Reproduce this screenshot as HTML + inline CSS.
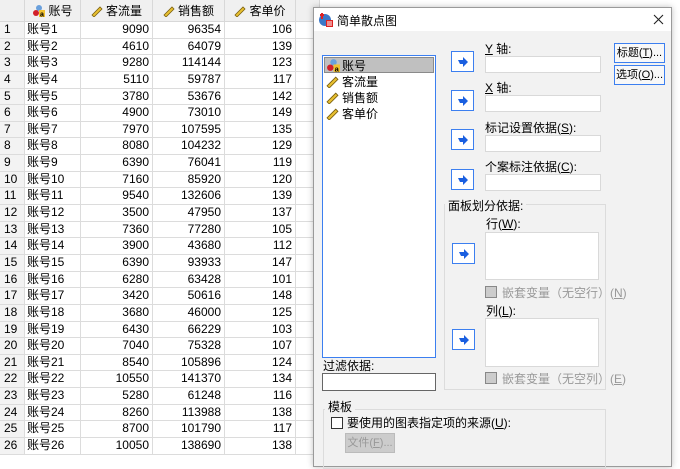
<!DOCTYPE html>
<html><head><meta charset="utf-8"><style>
*{margin:0;padding:0;box-sizing:border-box}
body{width:680px;height:455px;overflow:hidden;background:#fff;font-family:"Liberation Sans","Noto Sans CJK SC",sans-serif;font-size:12px;color:#000;position:relative}
.grid{position:absolute;left:0;top:0;width:320px}
.hdr{height:22px;background:#f0f0f0;border-bottom:1px solid #d8d8d8;display:flex}
.hdr div{border-right:1px solid #d8d8d8;text-align:center;line-height:22px;display:flex;align-items:center;justify-content:center;gap:3px}
.r{height:16.65px;display:flex;border-bottom:1px solid #dcdcdc}
.r div{border-right:1px solid #dcdcdc;line-height:15.5px;white-space:nowrap;overflow:hidden}
.c0{width:25px;background:#f3f3f3;padding-left:4px}
.c1{width:56px;padding-left:2px}
.c2{width:72px;text-align:right;padding-right:3px}
.c3{width:72px;text-align:right;padding-right:3px}
.c4{width:71px;text-align:right;padding-right:3px}
.c5{width:24px}
.dlg{position:absolute;left:313px;top:7px;width:359px;height:460px;background:#f2f2f2;border:1px solid #9a9a9a;box-shadow:0 0 6px rgba(0,0,0,.25)}
.tb{position:absolute;left:0;top:0;right:0;height:23px;background:#fff}
.a{position:absolute;white-space:nowrap}
.fld{position:absolute;background:#fff;border:1px solid #d9d9d9}
.arr{position:absolute;width:23px;height:21px;background:#fff;border:1px solid #3c7ff0;display:flex;align-items:center;justify-content:center}
.btn{position:absolute;width:51px;height:20px;border:1px solid #3c7ff0;background:#f8f8f8;text-align:center;line-height:18px;font-size:11px;white-space:nowrap;overflow:hidden}
.grp{position:absolute;border:1px solid #dcdcdc}
.gl{position:absolute;background:#f2f2f2;padding:0 3px}
.dis{color:#999}
.cb{position:absolute;width:12px;height:12px;border:1px solid #888;background:#ccc}
u{text-decoration:underline}
</style></head><body>
<div class="grid">
<div class="hdr"><div class="c0" style="width:25px;background:#f0f0f0"></div>
<div style="width:56px"><svg width="13" height="13" viewBox="0 0 13 13"><circle cx="7" cy="4" r="3" fill="#6aa0dc"/><circle cx="4" cy="9" r="3" fill="#d2202a"/><rect x="7" y="6" width="6" height="7" fill="#f2c230"/><text x="8" y="12.5" font-size="7" font-family="Liberation Sans" font-weight="bold">a</text></svg>账号</div>
<div style="width:72px"><svg width="12" height="12" viewBox="0 0 12 12"><path d="M1 10 L9 2 L11 4 L3 12Z" fill="#e8c030" stroke="#7a6010" stroke-width=".8"/></svg>客流量</div>
<div style="width:72px"><svg width="12" height="12" viewBox="0 0 12 12"><path d="M1 10 L9 2 L11 4 L3 12Z" fill="#e8c030" stroke="#7a6010" stroke-width=".8"/></svg>销售额</div>
<div style="width:71px"><svg width="12" height="12" viewBox="0 0 12 12"><path d="M1 10 L9 2 L11 4 L3 12Z" fill="#e8c030" stroke="#7a6010" stroke-width=".8"/></svg>客单价</div>
<div style="width:24px"></div></div>
<div class="r"><div class="c0">1</div><div class="c1">账号1</div><div class="c2">9090</div><div class="c3">96354</div><div class="c4">106</div><div class="c5"></div></div>
<div class="r"><div class="c0">2</div><div class="c1">账号2</div><div class="c2">4610</div><div class="c3">64079</div><div class="c4">139</div><div class="c5"></div></div>
<div class="r"><div class="c0">3</div><div class="c1">账号3</div><div class="c2">9280</div><div class="c3">114144</div><div class="c4">123</div><div class="c5"></div></div>
<div class="r"><div class="c0">4</div><div class="c1">账号4</div><div class="c2">5110</div><div class="c3">59787</div><div class="c4">117</div><div class="c5"></div></div>
<div class="r"><div class="c0">5</div><div class="c1">账号5</div><div class="c2">3780</div><div class="c3">53676</div><div class="c4">142</div><div class="c5"></div></div>
<div class="r"><div class="c0">6</div><div class="c1">账号6</div><div class="c2">4900</div><div class="c3">73010</div><div class="c4">149</div><div class="c5"></div></div>
<div class="r"><div class="c0">7</div><div class="c1">账号7</div><div class="c2">7970</div><div class="c3">107595</div><div class="c4">135</div><div class="c5"></div></div>
<div class="r"><div class="c0">8</div><div class="c1">账号8</div><div class="c2">8080</div><div class="c3">104232</div><div class="c4">129</div><div class="c5"></div></div>
<div class="r"><div class="c0">9</div><div class="c1">账号9</div><div class="c2">6390</div><div class="c3">76041</div><div class="c4">119</div><div class="c5"></div></div>
<div class="r"><div class="c0">10</div><div class="c1">账号10</div><div class="c2">7160</div><div class="c3">85920</div><div class="c4">120</div><div class="c5"></div></div>
<div class="r"><div class="c0">11</div><div class="c1">账号11</div><div class="c2">9540</div><div class="c3">132606</div><div class="c4">139</div><div class="c5"></div></div>
<div class="r"><div class="c0">12</div><div class="c1">账号12</div><div class="c2">3500</div><div class="c3">47950</div><div class="c4">137</div><div class="c5"></div></div>
<div class="r"><div class="c0">13</div><div class="c1">账号13</div><div class="c2">7360</div><div class="c3">77280</div><div class="c4">105</div><div class="c5"></div></div>
<div class="r"><div class="c0">14</div><div class="c1">账号14</div><div class="c2">3900</div><div class="c3">43680</div><div class="c4">112</div><div class="c5"></div></div>
<div class="r"><div class="c0">15</div><div class="c1">账号15</div><div class="c2">6390</div><div class="c3">93933</div><div class="c4">147</div><div class="c5"></div></div>
<div class="r"><div class="c0">16</div><div class="c1">账号16</div><div class="c2">6280</div><div class="c3">63428</div><div class="c4">101</div><div class="c5"></div></div>
<div class="r"><div class="c0">17</div><div class="c1">账号17</div><div class="c2">3420</div><div class="c3">50616</div><div class="c4">148</div><div class="c5"></div></div>
<div class="r"><div class="c0">18</div><div class="c1">账号18</div><div class="c2">3680</div><div class="c3">46000</div><div class="c4">125</div><div class="c5"></div></div>
<div class="r"><div class="c0">19</div><div class="c1">账号19</div><div class="c2">6430</div><div class="c3">66229</div><div class="c4">103</div><div class="c5"></div></div>
<div class="r"><div class="c0">20</div><div class="c1">账号20</div><div class="c2">7040</div><div class="c3">75328</div><div class="c4">107</div><div class="c5"></div></div>
<div class="r"><div class="c0">21</div><div class="c1">账号21</div><div class="c2">8540</div><div class="c3">105896</div><div class="c4">124</div><div class="c5"></div></div>
<div class="r"><div class="c0">22</div><div class="c1">账号22</div><div class="c2">10550</div><div class="c3">141370</div><div class="c4">134</div><div class="c5"></div></div>
<div class="r"><div class="c0">23</div><div class="c1">账号23</div><div class="c2">5280</div><div class="c3">61248</div><div class="c4">116</div><div class="c5"></div></div>
<div class="r"><div class="c0">24</div><div class="c1">账号24</div><div class="c2">8260</div><div class="c3">113988</div><div class="c4">138</div><div class="c5"></div></div>
<div class="r"><div class="c0">25</div><div class="c1">账号25</div><div class="c2">8700</div><div class="c3">101790</div><div class="c4">117</div><div class="c5"></div></div>
<div class="r"><div class="c0">26</div><div class="c1">账号26</div><div class="c2">10050</div><div class="c3">138690</div><div class="c4">138</div><div class="c5"></div></div>
</div>

<div class="dlg">
<div class="tb">
<svg class="a" style="left:4px;top:4px" width="16" height="16" viewBox="0 0 16 16"><circle cx="7" cy="8" r="6" fill="#3a78c8"/><rect x="2" y="2" width="4" height="2" fill="#d22"/><rect x="3" y="1" width="2" height="6" fill="#d22"/><rect x="8" y="8" width="7" height="7" fill="#d22"/><rect x="9" y="9" width="5" height="5" fill="#fff" opacity=".5"/></svg>
<div class="a" style="left:23px;top:4px">简单散点图</div>
<svg class="a" style="left:339px;top:6px" width="11" height="11" viewBox="0 0 11 11"><path d="M1 1 L10 10 M10 1 L1 10" stroke="#222" stroke-width="1.1"/></svg>
</div>
<div class="a" style="left:8px;top:47px;width:114px;height:303px;background:#fff;border:1px solid #3c7ff0"></div>
<div class="a" style="left:10px;top:49px;width:110px;height:16px;background:#c0c0c0;border:1px solid #8a8a8a"></div>
<svg class="a" style="left:12px;top:50px" width="14" height="14" viewBox="0 0 13 13"><circle cx="7" cy="4" r="3" fill="#6aa0dc"/><circle cx="4" cy="9" r="3" fill="#d2202a"/><rect x="7" y="6" width="6" height="7" fill="#f2c230"/><text x="8" y="12.5" font-size="7" font-family="Liberation Sans" font-weight="bold">a</text></svg>
<div class="a" style="left:28px;top:49px">账号</div>
<svg class="a" style="left:12px;top:67px" width="13" height="13" viewBox="0 0 12 12"><path d="M1 10 L9 2 L11 4 L3 12Z" fill="#e8c030" stroke="#7a6010" stroke-width=".8"/></svg>
<div class="a" style="left:28px;top:65px">客流量</div>
<svg class="a" style="left:12px;top:83px" width="13" height="13" viewBox="0 0 12 12"><path d="M1 10 L9 2 L11 4 L3 12Z" fill="#e8c030" stroke="#7a6010" stroke-width=".8"/></svg>
<div class="a" style="left:28px;top:81px">销售额</div>
<svg class="a" style="left:12px;top:99px" width="13" height="13" viewBox="0 0 12 12"><path d="M1 10 L9 2 L11 4 L3 12Z" fill="#e8c030" stroke="#7a6010" stroke-width=".8"/></svg>
<div class="a" style="left:28px;top:97px">客单价</div>

<div class="arr" style="left:137px;top:43px"><svg width="12" height="10" viewBox="0 0 12 10"><path d="M1 3 L6 3 L6 0 L11 5 L6 10 L6 7 L3 7Z" fill="#1a5fe0"/></svg></div>
<div class="arr" style="left:137px;top:82px"><svg width="12" height="10" viewBox="0 0 12 10"><path d="M1 3 L6 3 L6 0 L11 5 L6 10 L6 7 L3 7Z" fill="#1a5fe0"/></svg></div>
<div class="arr" style="left:137px;top:121px"><svg width="12" height="10" viewBox="0 0 12 10"><path d="M1 3 L6 3 L6 0 L11 5 L6 10 L6 7 L3 7Z" fill="#1a5fe0"/></svg></div>
<div class="arr" style="left:137px;top:161px"><svg width="12" height="10" viewBox="0 0 12 10"><path d="M1 3 L6 3 L6 0 L11 5 L6 10 L6 7 L3 7Z" fill="#1a5fe0"/></svg></div>

<div class="a" style="left:171px;top:32px"><u>Y</u> 轴:</div>
<div class="fld" style="left:171px;top:48px;width:116px;height:17px"></div>
<div class="a" style="left:171px;top:71px"><u>X</u> 轴:</div>
<div class="fld" style="left:171px;top:87px;width:116px;height:17px"></div>
<div class="a" style="left:171px;top:111px">标记设置依据(<u>S</u>):</div>
<div class="fld" style="left:171px;top:127px;width:116px;height:17px"></div>
<div class="a" style="left:171px;top:150px">个案标注依据(<u>C</u>):</div>
<div class="fld" style="left:171px;top:166px;width:116px;height:17px"></div>

<div class="btn" style="left:300px;top:35px">标题(<u>T</u>)...</div>
<div class="btn" style="left:300px;top:57px">选项(<u>O</u>)...</div>

<div class="grp" style="left:130px;top:196px;width:162px;height:186px"></div>
<div class="gl" style="left:131px;top:189px">面板划分依据:</div>
<div class="a" style="left:172px;top:207px">行(<u>W</u>):</div>
<div class="fld" style="left:171px;top:224px;width:114px;height:48px"></div>
<div class="arr" style="left:138px;top:235px"><svg width="12" height="10" viewBox="0 0 12 10"><path d="M1 3 L6 3 L6 0 L11 5 L6 10 L6 7 L3 7Z" fill="#1a5fe0"/></svg></div>
<div class="cb" style="left:171px;top:278px"></div>
<div class="a dis" style="left:188px;top:276px">嵌套变量（无空行）(<u>N</u>)</div>
<div class="a" style="left:172px;top:294px">列(<u>L</u>):</div>
<div class="fld" style="left:171px;top:310px;width:114px;height:49px"></div>
<div class="arr" style="left:138px;top:321px"><svg width="12" height="10" viewBox="0 0 12 10"><path d="M1 3 L6 3 L6 0 L11 5 L6 10 L6 7 L3 7Z" fill="#1a5fe0"/></svg></div>
<div class="cb" style="left:171px;top:364px"></div>
<div class="a dis" style="left:188px;top:362px">嵌套变量（无空列）(<u>E</u>)</div>

<div class="a" style="left:9px;top:349px">过滤依据:</div>
<div class="a" style="left:8px;top:365px;width:114px;height:18px;background:#fff;border:1px solid #666"></div>

<div class="grp" style="left:9px;top:401px;width:283px;height:60px"></div>
<div class="gl" style="left:11px;top:390px">模板</div>
<div class="a" style="left:17px;top:409px;width:12px;height:12px;border:1px solid #333;background:#fff"></div>
<div class="a" style="left:33px;top:406px">要使用的图表指定项的来源(<u>U</u>):</div>
<div class="a dis" style="left:31px;top:425px;width:50px;height:20px;background:#ccc;border:1px solid #bbb;text-align:center;line-height:18px;font-size:11px">文件(<u>F</u>)...</div>
</div>
</body></html>
